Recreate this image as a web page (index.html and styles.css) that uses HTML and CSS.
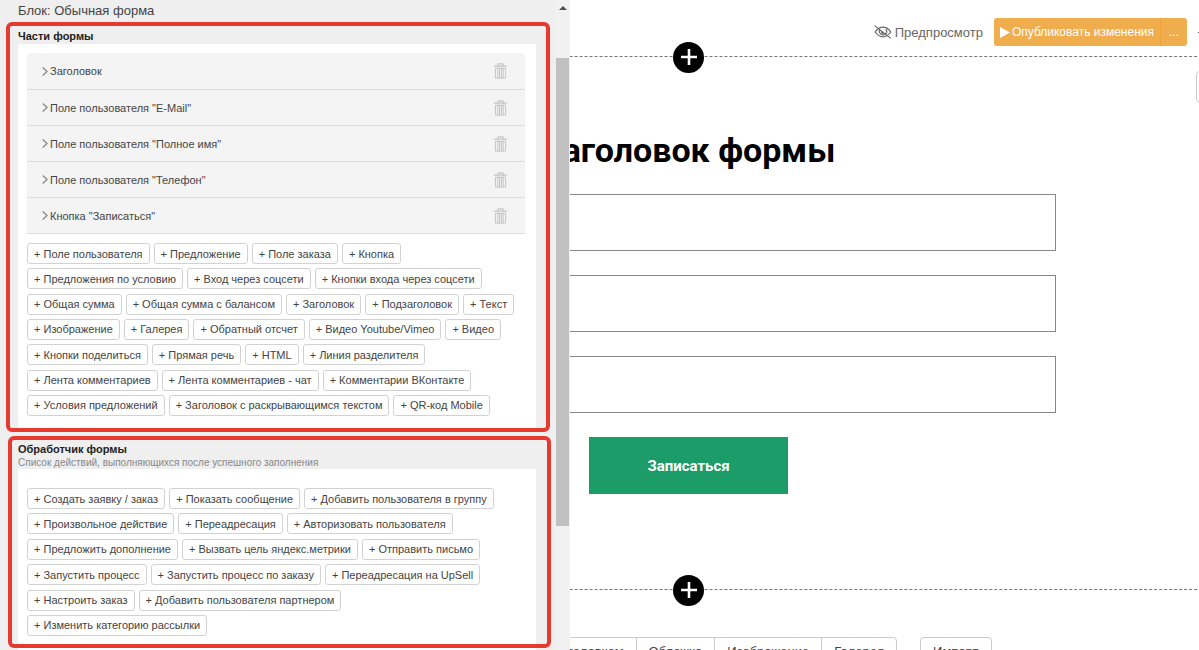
FILE: index.html
```
<!DOCTYPE html>
<html lang="ru">
<head>
<meta charset="utf-8">
<title>Обычная форма</title>
<link rel="stylesheet" href="styles.css">
</head>
<body>
<svg class="sprite" aria-hidden="true">
  <symbol id="trash" viewBox="0 0 13 16">
    <path d="M3.8 2.6V1.8Q3.8.8 4.8.8h3.4q1 0 1 1v.8M0 3.2h13" fill="none" stroke="currentColor" stroke-width="1.2"/>
    <path d="M1.4 5.2h10.2v9.9H1.4zM3.8 5v10M5.6 5v10M7.4 5v10M9.2 5v10" fill="none" stroke="currentColor" stroke-width="1"/>
  </symbol>
  <symbol id="chevron" viewBox="0 0 6 9">
    <path d="M.8.6 5 4.5.8 8.4" fill="none" stroke="currentColor" stroke-width="1.3"/>
  </symbol>
  <symbol id="plus" viewBox="0 0 16 16">
    <path d="M8 0v16M0 8h16" fill="none" stroke="currentColor" stroke-width="2.6"/>
  </symbol>
</svg>
<div class="app">
  <main class="canvas">
    <header class="topbar">
      <a class="preview" href="#">
        <svg class="preview-icon" viewBox="0 0 18 14" aria-hidden="true">
          <path d="M1.2 7Q4.5 2.2 9 2.2T16.8 7Q13.5 11.8 9 11.8T1.2 7zM6 4.2a3.600 3.600 0 1 0 6 0M7.400 6.500q0 1.900 1.800 1.900M.6.6 16.800 13.400" fill="none" stroke="currentColor" stroke-width="1.200"/>
        </svg>
        Предпросмотр
      </a>
      <div class="publish">
        <button class="publish-main" type="button">
          <svg class="play-icon" viewBox="0 0 10 11" aria-hidden="true"><path d="M0 0 10 5.500 0 11z" fill="currentColor"/></svg>
          Опубликовать изменения
        </button>
        <button class="publish-more" type="button">...</button>
      </div>
      <button class="caret" type="button" aria-label="Меню"></button>
    </header>
    <div class="divider"><button class="add" type="button" aria-label="Добавить блок"><svg class="add-icon"><use href="#plus"/></svg></button></div>
    <button class="block-tool" type="button" aria-label="Настройки блока"></button>
    <form class="form">
      <h1 class="form-title">Заголовок формы</h1>
      <input class="field" type="text" aria-label="E-Mail">
      <input class="field" type="text" aria-label="Полное имя">
      <input class="field" type="text" aria-label="Телефон">
      <button class="submit" type="button">Записаться</button>
    </form>
    <div class="divider"><button class="add" type="button" aria-label="Добавить блок"><svg class="add-icon"><use href="#plus"/></svg></button></div>
    <nav class="blocks">
      <div class="block-group">
        <button class="block" type="button">Текст с заголовком</button>
        <button class="block" type="button">Обложка</button>
        <button class="block" type="button">Изображение</button>
        <button class="block" type="button">Галерея</button>
      </div>
      <div class="block-group">
        <button class="block" type="button">Импорт</button>
      </div>
    </nav>
  </main>

  <aside class="panel">
    <div class="panel-body">
      <h2 class="panel-title">Блок: Обычная форма</h2>
      <section class="section parts">
        <h3 class="section-title">Части формы</h3>
        <div class="card">
          <ul class="items">
            <li class="item"><svg class="chevron"><use href="#chevron"/></svg><span class="item-name">Заголовок</span><button class="remove" type="button" aria-label="Удалить"><svg class="trash"><use href="#trash"/></svg></button></li>
            <li class="item"><svg class="chevron"><use href="#chevron"/></svg><span class="item-name">Поле пользователя "E-Mail"</span><button class="remove" type="button" aria-label="Удалить"><svg class="trash"><use href="#trash"/></svg></button></li>
            <li class="item"><svg class="chevron"><use href="#chevron"/></svg><span class="item-name">Поле пользователя "Полное имя"</span><button class="remove" type="button" aria-label="Удалить"><svg class="trash"><use href="#trash"/></svg></button></li>
            <li class="item"><svg class="chevron"><use href="#chevron"/></svg><span class="item-name">Поле пользователя "Телефон"</span><button class="remove" type="button" aria-label="Удалить"><svg class="trash"><use href="#trash"/></svg></button></li>
            <li class="item"><svg class="chevron"><use href="#chevron"/></svg><span class="item-name">Кнопка "Записаться"</span><button class="remove" type="button" aria-label="Удалить"><svg class="trash"><use href="#trash"/></svg></button></li>
          </ul>
          <div class="chips">
            <button class="chip" type="button">+ Поле пользователя</button>
            <button class="chip" type="button">+ Предложение</button>
            <button class="chip" type="button">+ Поле заказа</button>
            <button class="chip" type="button">+ Кнопка</button>
            <button class="chip" type="button">+ Предложения по условию</button>
            <button class="chip" type="button">+ Вход через соцсети</button>
            <button class="chip" type="button">+ Кнопки входа через соцсети</button>
            <button class="chip" type="button">+ Общая сумма</button>
            <button class="chip" type="button">+ Общая сумма с балансом</button>
            <button class="chip" type="button">+ Заголовок</button>
            <button class="chip" type="button">+ Подзаголовок</button>
            <button class="chip" type="button">+ Текст</button>
            <button class="chip" type="button">+ Изображение</button>
            <button class="chip" type="button">+ Галерея</button>
            <button class="chip" type="button">+ Обратный отсчет</button>
            <button class="chip" type="button">+ Видео Youtube/Vimeo</button>
            <button class="chip" type="button">+ Видео</button>
            <button class="chip" type="button">+ Кнопки поделиться</button>
            <button class="chip" type="button">+ Прямая речь</button>
            <button class="chip" type="button">+ HTML</button>
            <button class="chip" type="button">+ Линия разделителя</button>
            <button class="chip" type="button">+ Лента комментариев</button>
            <button class="chip" type="button">+ Лента комментариев - чат</button>
            <button class="chip" type="button">+ Комментарии ВКонтакте</button>
            <button class="chip" type="button">+ Условия предложений</button>
            <button class="chip" type="button">+ Заголовок с раскрывающимся текстом</button>
            <button class="chip" type="button">+ QR-код Mobile</button>
          </div>
        </div>
      </section>
      <section class="section handler">
        <h3 class="section-title">Обработчик формы</h3>
        <p class="hint">Список действий, выполняющихся после успешного заполнения</p>
        <div class="card">
          <div class="chips">
            <button class="chip" type="button">+ Создать заявку / заказ</button>
            <button class="chip" type="button">+ Показать сообщение</button>
            <button class="chip" type="button">+ Добавить пользователя в группу</button>
            <button class="chip" type="button">+ Произвольное действие</button>
            <button class="chip" type="button">+ Переадресация</button>
            <button class="chip" type="button">+ Авторизовать пользователя</button>
            <button class="chip" type="button">+ Предложить дополнение</button>
            <button class="chip" type="button">+ Вызвать цель яндекс.метрики</button>
            <button class="chip" type="button">+ Отправить письмо</button>
            <button class="chip" type="button">+ Запустить процесс</button>
            <button class="chip" type="button">+ Запустить процесс по заказу</button>
            <button class="chip" type="button">+ Переадресация на UpSell</button>
            <button class="chip" type="button">+ Настроить заказ</button>
            <button class="chip" type="button">+ Добавить пользователя партнером</button>
            <button class="chip" type="button">+ Изменить категорию рассылки</button>
          </div>
        </div>
      </section>
    </div>
    <div class="scrollbar">
      <span class="scroll-up"></span>
      <span class="scroll-thumb"></span>
    </div>
  </aside>
</div>
</body>
</html>
```
FILE: styles.css
```
* { box-sizing: border-box; }
body {
  margin: 0;
  font-family: "Liberation Sans", Arial, sans-serif;
  font-size: 11px;
  color: #444;
}
h1, h2, h3, p, ul { margin: 0; padding: 0; }
button { font: inherit; color: inherit; background: none; border: 0; padding: 0; }
.sprite { display: none; }
.app { position: relative; height: 100vh; overflow: hidden; background: #fff; }

.canvas { min-width: 1377px; }
.topbar {
  display: flex;
  justify-content: flex-end;
  align-items: center;
  width: 100vw;
  height: 56px;
  padding-top: 8px;
  overflow: hidden;
}
.preview {
  display: flex;
  align-items: center;
  gap: 3px;
  margin-right: 11px;
  font-size: 13px;
  color: #666;
  text-decoration: none;
}
.preview-icon { width: 18px; height: 14px; }
.publish {
  display: flex;
  height: 28px;
  border-radius: 3px;
  background: #f0ad4e;
  color: #fff;
  font-size: 12px;
}
.publish-main { display: flex; align-items: center; gap: 2px; padding: 0 6px; }
.play-icon { width: 10px; height: 11px; }
.publish-more { width: 27px; border-left: 1px solid #eea236; }
.caret { width: 1px; height: 1px; margin-left: 11px; background: #555; }
.divider {
  display: flex;
  justify-content: center;
  align-items: center;
  height: 1px;
  border-top: 1px dashed #777;
}
.add {
  display: flex;
  flex: none;
  justify-content: center;
  align-items: center;
  width: 31px;
  height: 31px;
  border-radius: 50%;
  background: #000;
  color: #fff;
}
.add-icon { width: 16px; height: 16px; }
.block-tool {
  position: absolute;
  top: 71px;
  left: calc(100vw - 3px);
  width: 32px;
  height: 32px;
  border: 1px solid #ccc;
  border-radius: 4px;
}
.form {
  display: flex;
  flex-direction: column;
  align-items: center;
  gap: 24px;
  width: 735px;
  margin: 0 auto;
  padding: 73px 0 95px;
}
.form-title { font: bold 34px/40px Roboto, sans-serif; color: #000; }
.field { width: 100%; height: 57px; border: 1px solid #888; background: #fff; }
.submit {
  width: 199px;
  height: 57px;
  background: #1b9c68;
  color: #fff;
  font: bold 15px Roboto, sans-serif;
}
.blocks {
  display: flex;
  justify-content: flex-end;
  gap: 23px;
  width: 606px;
  margin: 47px auto 0;
}
.block-group { display: flex; border: 1px solid #ccc; border-radius: 4px; }
.block { height: 27px; padding: 0 12px; font-size: 13px; white-space: nowrap; }
.block + .block { border-left: 1px solid #ccc; }

.panel {
  position: absolute;
  top: 0;
  bottom: 0;
  left: 0;
  display: flex;
  width: 570px;
  overflow: hidden;
  background: #efefef;
}
.panel-body { flex: 1; padding-left: 6px; }
.panel-title { padding-left: 12px; font-size: 13px; font-weight: normal; line-height: 22px; }
.section { position: relative; width: 544px; padding: 6px 14px 0 12px; }
.section::after {
  content: "";
  position: absolute;
  inset: 0;
  border: 4px solid #e63a30;
  border-radius: 6px;
  pointer-events: none;
}
.section-title { font-size: 11px; line-height: 16px; color: #222; }
.card { padding: 9px 11px 16px 9px; background: #fff; }
.items { list-style: none; border-radius: 3px; background: #f4f4f4; }
.item {
  display: flex;
  align-items: center;
  height: 36px;
  padding: 0 18px 0 15px;
  border-bottom: 1px solid #ddd;
}
.item:first-child { height: 37px; }
.chevron { width: 6px; height: 9px; margin-right: 2px; color: #888; }
.item-name { flex: 1; }
.trash { display: block; width: 13px; height: 16px; color: #c4c4c4; }
.chips {
  display: flex;
  flex-wrap: wrap;
  align-content: space-between;
  column-gap: 4px;
  margin-right: 8px;
}
.chip {
  height: 21px;
  padding: 0 6px;
  border: 1px solid #d2d2d2;
  border-radius: 3px;
  background: #fff;
  white-space: nowrap;
}
.parts .chips { height: 173px; margin-top: 9px; }
.handler { margin-top: 4px; }
.handler::after { inset: 0 -1px 4px 2px; }
.handler .section-title { line-height: 14px; }
.handler .card { padding-top: 19px; }
.handler .chips { height: 148px; }
.hint { font-size: 10px; line-height: 13px; color: #888; }
.scrollbar { display: flex; flex-direction: column; width: 14px; background: #f1f1f1; }
.scroll-up {
  width: 0;
  margin: 6px auto 48px 3px;
  border: 4px solid transparent;
  border-top: 0;
  border-bottom-color: #505050;
}
.scroll-thumb { height: 72%; margin-right: 1px; background: #c1c1c1; }
```
